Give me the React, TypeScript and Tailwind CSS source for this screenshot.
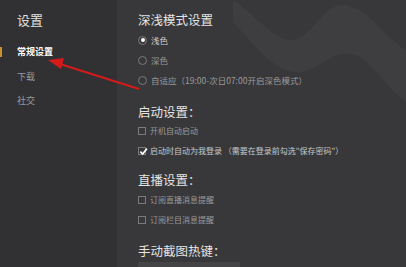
const font = { fontFamily: '"Noto Sans CJK SC", "Noto Sans", sans-serif' };

function Radio({ checked, label }: { checked?: boolean; label: string }) {
  return (
    <div className="flex h-[20px] items-center gap-[4px]">
      <span className="flex h-[9px] w-[9px] items-center justify-center rounded-full border border-[#7a7a7c]">
        {checked && <span className="h-[4px] w-[4px] rounded-full bg-white" />}
      </span>
      <span className={`text-[8.5px] ${checked ? 'text-[#d0d0d0]' : 'text-[#9a9a9c]'}`}>{label}</span>
    </div>
  );
}

function Checkbox({ checked, label }: { checked?: boolean; label: string }) {
  return (
    <div className="flex h-[20px] items-center gap-[4px]">
      <span className="relative flex h-[8px] w-[8px] items-center justify-center border border-[#7a7a7c]">
        {checked && (
          <svg viewBox="0 0 10 10" className="absolute left-[0px] top-[-1px] h-[9px] w-[9px]">
            <path d="M1.5 5.2 L4 7.8 L8.8 1.8" fill="none" stroke="#ffffff" strokeWidth="1.8" />
          </svg>
        )}
      </span>
      <span className={`whitespace-pre text-[8px] ${checked ? 'text-[#c8c8c8]' : 'text-[#9a9a9c]'}`}>{label}</span>
    </div>
  );
}

function SectionTitle({ children, className = '' }: { children: string; className?: string }) {
  return <div className={`h-[16px] text-[12.5px] leading-[16px] text-[#e4e4e4] ${className}`}>{children}</div>;
}

export default function App() {
  return (
    <div className="relative flex h-[267px] w-[406px] overflow-hidden bg-[#38383a]" style={font}>
      {/* Sidebar */}
      <div className="w-[117px] shrink-0 bg-[#313133] pt-[12px]">
        <div className="h-[16px] pl-[17px] text-[13px] leading-[16px] text-[#e0e0e0]">设置</div>
        <div className="mt-[12px]">
          <div className="relative flex h-[24px] items-center pl-[17px] text-[9px] font-bold text-white">
            <span className="absolute left-0 top-[7px] h-[10px] w-[2px] bg-[#c8922a]" />
            常规设置
          </div>
          <div className="flex h-[25px] items-center pl-[17px] text-[9px] text-[#9a9a9c]">下载</div>
          <div className="flex h-[24px] items-center pl-[17px] text-[9px] text-[#9a9a9c]">社交</div>
        </div>
      </div>

      {/* Main */}
      <div className="relative flex-1 pl-[21px] pt-[12px]">
        <svg className="pointer-events-none absolute left-0 top-0" width="289" height="120" viewBox="0 0 289 120">
          <path
            d="M116 0 C140 16 158 42 176 40 C196 38 205 3 228 5 C252 8 270 40 289 50 L289 102 C270 90 252 56 234 54 C210 52 200 74 178 72 C156 70 138 46 116 22 Z"
            fill="#3e3e40"
          />
        </svg>
        <div className="relative">
          <SectionTitle>深浅模式设置</SectionTitle>
          <div className="mt-[2px]">
            <Radio checked label="浅色" />
            <Radio label="深色" />
            <Radio label="自适应（19:00-次日07:00开启深色模式）" />
          </div>

          <SectionTitle className="mt-[14px]">启动设置：</SectionTitle>
          <div className="mt-[1px]">
            <Checkbox label="开机自动启动" />
            <Checkbox checked label={'启动时自动为我登录 （需要在登录前勾选"保存密码"）'} />
          </div>

          <SectionTitle className="mt-[11px]">直播设置：</SectionTitle>
          <div className="mt-[2px]">
            <Checkbox label="订阅直播消息提醒" />
            <Checkbox label="订阅栏目消息提醒" />
          </div>

          <SectionTitle className="mt-[13px]">手动截图热键：</SectionTitle>
          <div className="mt-[3px] h-[20px] w-[102px] bg-[#444446]" />
        </div>
      </div>

      {/* Annotation arrow */}
      <svg className="pointer-events-none absolute left-0 top-0" width="406" height="267" viewBox="0 0 406 267">
        <line x1="139" y1="89" x2="60" y2="64" stroke="#d41a1a" strokeWidth="2" />
        <polygon points="48,60 64,58 61,69" fill="#d41a1a" />
      </svg>
    </div>
  );
}
